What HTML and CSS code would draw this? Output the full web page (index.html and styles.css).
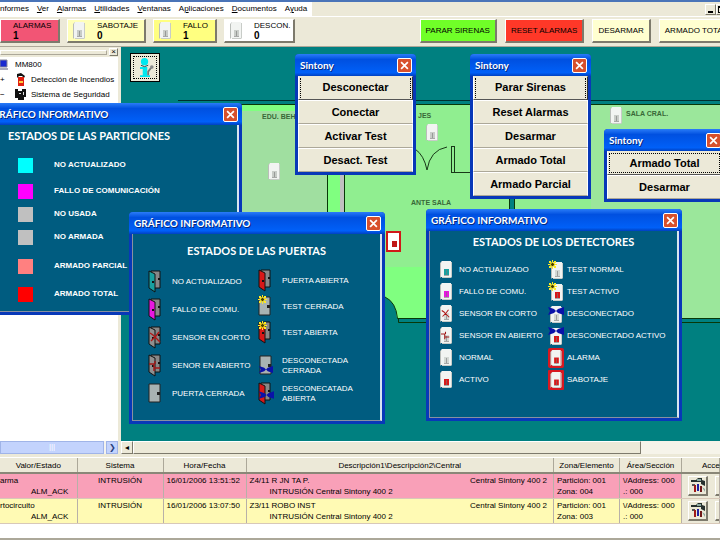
FILE: index.html
```html
<!DOCTYPE html>
<html lang="es">
<head>
  <meta charset="UTF-8">
  <meta name="viewport" content="width=device-width, initial-scale=1.0">
  <title>Sintony - MM800</title>
  <link rel="stylesheet" href="styles.css">
</head>
<body>
  <!-- Iconos compartidos -->
  <svg class="sprite" aria-hidden="true">
    <symbol id="detector" viewBox="0 0 12 17">
      <path d="M0 2L2 0V15L0 17Z" fill="#b9bdb9"/>
      <path d="M2 0H11V16H1V2Z" fill="#f2f4f2"/>
      <path d="M11 1H12V16L11 17H2V16H11Z" fill="#c8ccc8"/>
      <path d="M4 8H9V14H4Z" fill="currentColor"/>
      <path d="M6 9H7V14H6ZM4 14H9V15H4Z" fill="#777" fill-opacity=".6"/>
    </symbol>
    <symbol id="door-open" viewBox="0 0 14 23">
      <path d="M3 1H12V18H3Z" fill="#888" stroke="#111"/>
      <path d="M1 1L7 4V22L1 18Z" fill="currentColor" stroke="#111"/>
      <path d="M4 11H6V13H4ZM10 8H12V10H10Z" fill="#111"/>
    </symbol>
    <symbol id="door-closed" viewBox="0 0 14 23">
      <path d="M1 2H12V20H1Z" fill="#a9b3b3" stroke="#222"/>
      <path d="M9 10H12V13H9Z" fill="#222"/>
    </symbol>
    <symbol id="cross" viewBox="0 0 12 12">
      <path d="M1 2L4 4L6 6L11 11M10 1L7 5L2 10" fill="none" stroke="#b01818" stroke-width="1.4"/>
    </symbol>
    <symbol id="cut" viewBox="0 0 12 12">
      <path d="M0 4H5V8H11M6 1V4M5 11V8" fill="none" stroke="#a01818" stroke-width="1.4"/>
    </symbol>
    <symbol id="sun" viewBox="0 0 9 9">
      <path d="M1 1H3V3H1ZM4 0H5V2H4ZM6 1H8V3H6ZM0 4H9V5H0ZM1 6H3V8H1ZM4 7H5V9H4ZM6 6H8V8H6Z" fill="#ffeb20"/>
      <circle cx="4.500" cy="4.500" r="2" fill="#443c00" stroke="#ffeb20"/>
    </symbol>
    <symbol id="bow" viewBox="0 0 16 8">
      <path d="M0 0L6 2L8 4L10 2L16 0V8L10 6L8 4L6 6L0 8L2 4Z" fill="#0a12a8"/>
    </symbol>
    <symbol id="close" viewBox="0 0 8 8">
      <path d="M1 1L7 7M7 1L1 7" stroke="#fff" stroke-width="1.500" fill="none"/>
    </symbol>
    <symbol id="camera" viewBox="0 0 16 16">
      <path d="M1 3H6L8 1H12V3L15 4V9L11 7V5H1Z" fill="#26302e"/>
      <path d="M7 2H11V4H7ZM12 10L15 12V15Z" fill="#8aa8a0"/>
      <path d="M2 7H5V9H2Z" fill="#555"/>
      <path d="M4 8H6V15H4Z" fill="#a01818"/>
      <path d="M7 7H9V14H7Z" fill="#2020a0"/>
      <path d="M10 9H12V15H10Z" fill="#701818"/>
    </symbol>
  </svg>

  <div class="desktop">
    <nav class="menubar">
      <div class="menu">
        <a href="#">nformes</a>
        <a href="#"><u>V</u>er</a>
        <a href="#"><u>A</u>larmas</a>
        <a href="#"><u>U</u>tilidades</a>
        <a href="#"><u>V</u>entanas</a>
        <a href="#">A<u>p</u>licaciones</a>
        <a href="#"><u>D</u>ocumentos</a>
        <a href="#">A<u>y</u>uda</a>
      </div>
      <div class="sysbuttons">
        <button aria-label="Minimizar"><svg width="7" height="7"><path d="M1 5H6V7H1Z"/></svg></button>
        <button aria-label="Restaurar"><svg width="7" height="7"><path d="M0 0H7V7H0ZM1 2V6H6V2Z" fill-rule="evenodd"/></svg></button>
      </div>
    </nav>

    <div class="toolbar">
      <div class="group">
        <button class="counter alarm"><span>ALARMAS<b>1</b></span></button>
        <button class="counter sabotage"><svg class="detector"><use href="#detector"/></svg><span>SABOTAJE<b>0</b></span></button>
        <button class="counter fault"><svg class="detector"><use href="#detector"/></svg><span>FALLO<b>1</b></span></button>
        <button class="counter off"><svg class="detector"><use href="#detector"/></svg><span>DESCON.<b>0</b></span></button>
      </div>
      <div class="group actions">
        <button class="green">PARAR SIRENAS</button>
        <button class="red">RESET ALARMAS</button>
        <button>DESARMAR</button>
        <button>ARMADO TOTAL</button>
      </div>
    </div>

    <div class="workspace">
      <aside class="side">
        <div class="grip"><i></i><button aria-label="Cerrar panel">×</button></div>
        <ul class="tree">
          <li class="root">
            <svg width="9" height="12" viewBox="0 0 9 12"><path d="M0 1H7V8H0Z" fill="#1a2ad0" stroke="#889"/><path d="M0 9H8V11H0Z" fill="#aab"/></svg>
            MM800
          </li>
          <li>
            <span class="knob">+</span>
            <svg width="12" height="14" viewBox="0 0 12 14"><path d="M2 1L6 0L10 3L9 5L7 3H4L2 5Z" fill="#111"/><path d="M3 4H9V13H3Z" fill="#e02010"/><path d="M4 8H8V10H4Z" fill="#ffd040"/></svg>
            Detección de Incendios
          </li>
          <li>
            <span class="knob">−</span>
            <svg width="12" height="14" viewBox="0 0 12 14"><path d="M0 1H3V3H7V1H11V9H9V12H3V10H0Z" fill="#111"/><path d="M4 5H6V6H4ZM8 4H9V7H8Z" fill="#ddd"/></svg>
            Sistema de Seguridad
          </li>
        </ul>
        <div class="hscroll"><i class="thumb">|||</i><button aria-label="Desplazar">❯</button></div>
      </aside>

      <main class="plan">
        <div class="canvas">
          <svg class="map" viewBox="121 48 599 394" preserveAspectRatio="xMinYMin slice">
            <path d="M178 101.500H720" stroke="#003030" fill="none"/>
            <path d="M178 105H720V319H397Q396 303 385 298H242V105Z" fill="#90ee90"/>
            <path d="M242 105H345V298H242Z" fill="#80ff80"/>
            <path d="M345 105H510V112H345Z" fill="#90ee90"/>
            <path d="M242 112H327V298H242Z" fill="#a0dfa0"/>
            <path d="M340 112H344V298H340Z" fill="#c0c0c0"/>
            <path d="M591 106H720V319H591Z" fill="#9be79b"/>
            <path d="M385 268H427V319H397Q396 303 385 298Z" fill="#80ff80"/>
            <path d="M510 190H514V319H510Z" fill="#008080"/>
            <path d="M178 105.500H720M327.500 112V298M344.500 106V298M385 298Q396 303 397.500 319.500H720M398.500 319V323.500H720M509.500 190V319M514.500 190V319" stroke="#083808" fill="none"/>
            <path d="M415 150Q424 156 427 171Q430 151 447 148M451.500 147V173M454.500 147V173M451 147.500H455M397 174.500H402M451 173.500H471" stroke="#183818" fill="none"/>
            <g class="rooms">
              <text x="262" y="120">EDU. BEHU</text>
              <text x="418" y="119">JES</text>
              <text x="411" y="206">ANTE SALA</text>
              <text x="626" y="117">SALA CRAL.</text>
            </g>
            <g color="#c8ccc8">
              <use href="#detector" x="268" y="164" width="12" height="17"/>
              <use href="#detector" x="426" y="125" width="12" height="17"/>
              <use href="#detector" x="610" y="108" width="12" height="17"/>
            </g>
            <path d="M387 233H400V252H387Z" fill="#fff" stroke="#d01818" stroke-width="2"/>
            <path d="M392 242H397V248H392Z" fill="#c01818"/>
          </svg>
          <button class="info" aria-label="Información">
            <svg width="20" height="20" viewBox="2 0 21 22"><circle cx="12" cy="4" r="4" fill="#00e8f0"/><path d="M7 10H15V19H18V21H7V19H10V12H7Z" fill="#00e8f0"/><path d="M8 8Q12 11 16 8" fill="none" stroke="#18404a"/><path d="M16 19V15L19 11" fill="none" stroke="#777" stroke-width="2"/><circle cx="20" cy="10" r="2" fill="#888"/></svg>
          </button>
        </div>
        <div class="hscroll classic"><button aria-label="Desplazar">◂</button><i class="thumb"></i></div>
      </main>
    </div>

    <section class="events">
      <table>
        <colgroup>
          <col class="c-state"><col class="c-system"><col class="c-date"><col><col class="c-zone"><col class="c-area"><col class="c-access">
        </colgroup>
        <thead>
          <tr><th>Valor/Estado</th><th>Sistema</th><th>Hora/Fecha</th><th>Descripción1\Descripción2\Central</th><th>Zona/Elemento</th><th>Área/Sección</th><th>Acceso</th></tr>
        </thead>
        <tbody>
          <tr class="pink">
            <td class="state">arma<span>ALM_ACK</span></td>
            <td class="system">INTRUSIÓN</td>
            <td>16/01/2006 13:51:52</td>
            <td><div class="split"><span>Z4/11 R JN TA P.</span><span>Central Sintony 400 2</span></div><span class="sub">INTRUSIÓN Central Sintony 400 2</span></td>
            <td>Partición: 001<br>Zona: 004</td>
            <td>\/Address: 000<br>.: 000</td>
            <td class="access"><div><button aria-label="Cámara"><svg width="16" height="16"><use href="#camera"/></svg></button><button aria-label="Plano"></button></div></td>
          </tr>
          <tr class="yellow">
            <td class="state">rtocircuito<span>ALM_ACK</span></td>
            <td class="system">INTRUSIÓN</td>
            <td>16/01/2006 13:07:50</td>
            <td><div class="split"><span>Z3/11 ROBO INST</span><span>Central Sintony 400 2</span></div><span class="sub">INTRUSIÓN Central Sintony 400 2</span></td>
            <td>Partición: 001<br>Zona: 003</td>
            <td>\/Address: 000<br>.: 000</td>
            <td class="access"><div><button aria-label="Cámara"><svg width="16" height="16"><use href="#camera"/></svg></button><button aria-label="Plano"></button></div></td>
          </tr>
        </tbody>
      </table>
    </section>

    <!-- Ventanas flotantes -->
    <section class="window w-detector">
      <header><h2>Sintony</h2><button class="x" aria-label="Cerrar"><svg><use href="#close"/></svg></button></header>
      <div class="commands">
        <button class="default sides"><span>Desconectar</span></button>
        <button>Conectar</button>
        <button>Activar Test</button>
        <button>Desact. Test</button>
      </div>
    </section>

    <section class="window w-central">
      <header><h2>Sintony</h2><button class="x" aria-label="Cerrar"><svg><use href="#close"/></svg></button></header>
      <div class="commands">
        <button class="default sides"><span>Parar Sirenas</span></button>
        <button>Reset Alarmas</button>
        <button>Desarmar</button>
        <button>Armado Total</button>
        <button>Armado Parcial</button>
      </div>
    </section>

    <section class="window w-area">
      <header><h2>Sintony</h2><button class="x" aria-label="Cerrar"><svg><use href="#close"/></svg></button></header>
      <div class="commands">
        <button class="default"><span>Armado Total</span></button>
        <button>Desarmar</button>
      </div>
    </section>

    <section class="window w-partitions">
      <header><h2>GRÁFICO INFORMATIVO</h2><button class="x" aria-label="Cerrar"><svg><use href="#close"/></svg></button></header>
      <div class="legend">
        <h3>ESTADOS DE LAS PARTICIONES</h3>
        <ul class="swatches">
          <li><i class="cyan"></i>NO ACTUALIZADO</li>
          <li><i class="magenta"></i>FALLO DE COMUNICACIÓN</li>
          <li><i class="silver"></i>NO USADA</li>
          <li><i class="silver"></i>NO ARMADA</li>
          <li><i class="salmon"></i>ARMADO PARCIAL</li>
          <li><i class="solid-red"></i>ARMADO TOTAL</li>
        </ul>
      </div>
    </section>

    <section class="window w-doors">
      <header><h2>GRÁFICO INFORMATIVO</h2><button class="x" aria-label="Cerrar"><svg><use href="#close"/></svg></button></header>
      <div class="legend">
        <h3>ESTADOS DE LAS PUERTAS</h3>
        <div class="columns">
          <ul>
            <li><svg class="teal" viewBox="0 0 16 24"><use href="#door-open" width="14" height="23"/></svg>NO ACTUALIZADO</li>
            <li><svg class="pinkish" viewBox="0 0 16 24"><use href="#door-open" width="14" height="23"/></svg>FALLO DE COMU.</li>
            <li><svg class="gray" viewBox="0 0 16 24"><use href="#door-open" width="14" height="23"/><use href="#cross" x="1" y="5" width="12" height="12"/></svg>SENSOR EN CORTO</li>
            <li><svg class="gray" viewBox="0 0 16 24"><use href="#door-open" width="14" height="23"/><use href="#cut" x="1" y="6" width="12" height="12"/></svg>SENOR EN ABIERTO</li>
            <li><svg viewBox="0 0 16 24"><use href="#door-closed" width="14" height="23"/></svg>PUERTA CERRADA</li>
          </ul>
          <ul class="right">
            <li><svg class="crimson" viewBox="0 0 16 24"><use href="#door-open" width="14" height="23"/></svg>PUERTA ABIERTA</li>
            <li><svg viewBox="0 0 16 24"><use href="#door-closed" width="14" height="23"/><use href="#sun" width="9" height="9"/></svg>TEST CERRADA</li>
            <li><svg class="crimson" viewBox="0 0 16 24"><use href="#door-open" width="14" height="23"/><use href="#sun" width="9" height="9"/></svg>TEST ABIERTA</li>
            <li class="two"><svg viewBox="0 0 16 24"><use href="#door-closed" x="1" width="14" height="23"/><use href="#bow" x="1" y="12" width="14" height="7"/></svg>DESCONECTADA<br>CERRADA</li>
            <li><svg class="crimson" viewBox="0 0 16 24"><use href="#door-open" width="14" height="23"/><use href="#bow" x="1" y="9" width="15" height="8"/></svg>DESCONECATADA<br>ABIERTA</li>
          </ul>
        </div>
      </div>
    </section>

    <section class="window w-detectors">
      <header><h2>GRÁFICO INFORMATIVO</h2><button class="x" aria-label="Cerrar"><svg><use href="#close"/></svg></button></header>
      <div class="legend">
        <h3>ESTADOS DE LOS DETECTORES</h3>
        <div class="columns">
          <ul>
            <li><svg class="teal" viewBox="0 0 12 18"><use href="#detector" width="12" height="17"/></svg>NO ACTUALIZADO</li>
            <li><svg class="pinkish" viewBox="0 0 12 18"><use href="#detector" width="12" height="17"/></svg>FALLO DE COMU.</li>
            <li><svg class="blank" viewBox="0 0 12 18"><use href="#detector" width="12" height="17"/><use href="#cross" x="1" y="4" width="9" height="9"/></svg>SENSOR EN CORTO</li>
            <li><svg class="blank" viewBox="0 0 12 18"><use href="#detector" width="12" height="17"/><use href="#cut" x="1" y="4" width="9" height="9"/></svg>SENSOR EN ABIERTO</li>
            <li><svg class="blank" viewBox="0 0 12 18"><use href="#detector" width="12" height="17"/></svg>NORMAL</li>
            <li><svg class="crimson" viewBox="0 0 12 18"><use href="#detector" width="12" height="17"/></svg>ACTIVO</li>
          </ul>
          <ul class="right">
            <li><svg class="blank" viewBox="0 0 16 20"><use href="#detector" x="3" y="2" width="12" height="17"/><use href="#sun" width="9" height="9"/></svg>TEST NORMAL</li>
            <li><svg class="crimson" viewBox="0 0 16 20"><use href="#detector" x="3" y="2" width="12" height="17"/><use href="#sun" width="9" height="9"/></svg>TEST ACTIVO</li>
            <li><svg class="blank" viewBox="0 0 16 20"><use href="#detector" x="2" y="2" width="12" height="17"/><use href="#bow" y="3" width="16" height="8"/></svg>DESCONECTADO</li>
            <li><svg class="crimson" viewBox="0 0 16 20"><use href="#detector" x="2" y="2" width="12" height="17"/><use href="#bow" y="1" width="16" height="8"/></svg>DESCONECTADO ACTIVO</li>
            <li><svg class="crimson" viewBox="0 0 16 20"><rect width="16" height="20" rx="2" fill="#d81820"/><use href="#detector" x="2" y="2" width="12" height="16"/></svg>ALARMA</li>
            <li><svg class="crimson" viewBox="0 0 16 20"><rect width="16" height="20" rx="1" fill="#d81820"/><use href="#detector" x="2" y="2" width="12" height="16"/></svg>SABOTAJE</li>
          </ul>
        </div>
      </div>
    </section>
  </div>
</body>
</html>
```

FILE: styles.css
```css
* { box-sizing: border-box; }
body { margin: 0; font: 8px/10px "Liberation Sans", Arial, sans-serif; color: #000; background: #ece9d8; }
ul { list-style: none; margin: 0; padding: 0; }
h2, h3 { margin: 0; }
button { font: inherit; color: inherit; padding: 0; background: #ece9d8; border: 1px solid; border-color: #fff #7d7a6c #7d7a6c #fff; }
a { color: inherit; text-decoration: none; }
.sprite { display: none; }

.desktop { position: relative; display: flex; flex-direction: column; min-height: 100vh; overflow: hidden; border-top: 2px solid #4a74b8; }

/* Menú */
.menubar { display: flex; justify-content: space-between; height: 15px; border-bottom: 1px solid #fff; }
.menu { display: flex; gap: 8px; padding: 2px 5px 0 0; background: #fff; white-space: nowrap; }
.sysbuttons { display: flex; align-items: center; margin-right: -7px; }
.sysbuttons button { display: flex; align-items: center; justify-content: center; width: 11px; height: 11px; }

/* Barra de estado y comandos */
.toolbar { display: flex; justify-content: space-between; height: 30px; padding: 2px 0 3px; border-bottom: 1px solid #aca899; }
.group { display: flex; gap: 7px; }
.group button { border-width: 1px 2px 2px 1px; white-space: nowrap; }
.counter { display: flex; align-items: center; gap: 12px; padding-left: 5px; text-align: left; }
.counter b { display: block; font-size: 10px; line-height: 10px; }
.counter.alarm { width: 60px; padding-left: 12px; background: #f25575; }
.counter.sabotage { width: 79px; background: #ffffb8; }
.counter.fault { width: 64px; background: #ffff80; }
.counter.off { width: 71px; background: #fff; }
.detector { width: 12px; height: 17px; color: #c8ccc8; }
.actions { gap: 8px; margin-right: -14px; }
.actions button { padding: 0 5px; background: #ffffd0; }
.actions .green { background: #70ff28; }
.actions .red { background: #ff3828; }

/* Zona central */
.workspace { display: flex; flex: 1; }
.side { display: flex; flex-direction: column; width: 118px; background: #fff; }
.grip { display: flex; align-items: center; gap: 2px; height: 10px; background: #ece9d8; }
.grip i { flex: 1; height: 5px; border: 1px solid; border-color: #fff #aca899 #aca899 #fff; }
.grip button { width: 9px; height: 8px; line-height: 6px; }
.tree { flex: 1; white-space: nowrap; overflow: hidden; }
.tree li { display: flex; align-items: center; height: 15px; }
.tree li svg { margin-right: 4px; }
.tree .root svg { margin-right: 6px; }
.knob { width: 15px; }
.hscroll { display: flex; align-items: stretch; gap: 2px; height: 13px; background: #f4f3ee; }
.hscroll button { width: 12px; background: #c3d3fd; border: 1px solid #a0b4e8; color: #28407c; line-height: 8px; }
.hscroll .thumb { flex: 1; background: #c3d3fd; border: 1px solid #a0b4e8; color: #fff; font-style: normal; text-align: center; }
.plan { display: flex; flex: 1; flex-direction: column; min-width: 0; border-left: 3px solid #ece9d8; }
.canvas { position: relative; flex: 1; padding: 6px 9px; background: #008080; overflow: hidden; }
.map { position: absolute; top: 0; left: 0; width: 100%; height: 100%; }
.rooms { font: bold 7px "Liberation Sans", Arial, sans-serif; fill: #386838; }
.info { position: relative; display: flex; align-items: center; justify-content: center; width: 30px; height: 29px; border: 1px solid #000; outline: 1px dotted #000; outline-offset: -4px; }
.hscroll.classic { gap: 0; padding-right: 79px; background: #f6f4ea; }
.hscroll.classic button, .hscroll.classic .thumb { background: #ece9d8; border-color: #fff #7d7a6c #7d7a6c #fff; color: #000; }

/* Lista de eventos */
.events { margin-top: 3px; padding-bottom: 14px; background: #fff; border-top: 1px solid #fff; border-bottom: 2px solid #aca899; overflow: hidden; }
table { width: 100%; table-layout: fixed; border-collapse: collapse; }
.c-state { width: 77px; }
.c-system { width: 86px; }
.c-date { width: 83px; }
.c-zone { width: 66px; }
.c-area { width: 62px; }
.c-access { width: 38px; }
th { height: 15px; padding: 2px 0 0; font-weight: normal; background: #ece9d8; border-right: 1px solid #aca899; border-bottom: 2px solid #8a8778; white-space: nowrap; }
th:last-child { padding-left: 20px; }
td { height: 25px; padding: 1px 3px; vertical-align: top; line-height: 11px; border-right: 1px solid #b8b0a8; border-bottom: 1px solid #d8c8b8; white-space: nowrap; overflow: hidden; }
.pink { background: #f9a0b8; }
.yellow { background: #fffab4; }
.state { padding-left: 0; }
.state span { display: block; padding-left: 31px; }
.system { text-align: center; }
.split { display: flex; justify-content: space-between; padding-right: 3px; }
.sub { padding-left: 20px; }
td.access { padding: 2px 0 2px 6px; background: #ece9d8; }
.access div { display: flex; gap: 7px; }
.access button { flex: none; width: 20px; height: 20px; border-width: 1px 2px 2px 1px; }

/* Ventanas */
.window { position: absolute; padding: 0 3px 3px; background: #0838b8; border-radius: 4px 4px 0 0; }
.window header { display: flex; align-items: center; justify-content: space-between; height: 22px; margin: 0 -3px; padding: 0 4px 0 5px; background: linear-gradient(#2a7cf8, #0050e0 25%, #0060f8 85%, #0040c0); border-radius: 4px 4px 0 0; }
.window h2 { font: bold 10px/12px Lato, "Open Sans", sans-serif; color: #fff; text-shadow: 1px 1px #04287c; white-space: nowrap; }
.x { display: flex; align-items: center; justify-content: center; width: 15px; height: 15px; background: #d8502c; border: 1px solid #fff; border-radius: 2px; }
.x svg { width: 9px; height: 9px; }
.commands { display: flex; flex-direction: column; }
.commands button { height: 24px; font-size: 11px; font-weight: bold; border-color: #fff #fff #aca899 #fff; white-space: nowrap; }
.commands .default { padding: 1px; border-color: #ece9d8 #333 #555 #fff; }
.default span { display: block; height: 20px; line-height: 19px; border: 1px dotted #000; }
.default.sides span { border-top: 0; border-bottom: 0; }

.w-detector { top: 52px; left: 295px; width: 121px; }
.w-central { top: 52px; left: 470px; width: 121px; }
.w-area { top: 127px; left: 604px; width: 121px; }
.w-partitions { top: 101px; left: -13px; width: 255px; }
.w-doors { top: 210px; left: 129px; width: 256px; }
.w-detectors { top: 207px; left: 426px; width: 256px; }

/* Leyendas */
.legend { min-height: 187px; padding: 4px 8px; background: #005c80; border: 1px solid #8890a0; border-top: 0; border-right: 2px solid #d8e4f0; color: #fff; }
.legend h3 { font: bold 11px/14px Lato, "Open Sans", sans-serif; white-space: nowrap; }
.legend li { display: flex; align-items: center; white-space: nowrap; }
.swatches { display: grid; grid-template-rows: 28px 24px 22px 24px 34px 22px; padding: 8px 0 0 19px; font-weight: bold; }
.swatches i { width: 15px; height: 15px; margin-right: 21px; }
.cyan { background: #00ffff; }
.magenta { background: #ff00ff; }
.silver { background: #c0c0c0; }
.salmon { background: #ff8080; }
.solid-red { background: #ff0000; }
.columns { display: flex; }
.teal { color: #18a0a0; }
.pinkish { color: #e818e0; }
.gray { color: #909090; }
.crimson { color: #d81818; }
.blank { color: #d4d8d4; }
.w-partitions h3 { padding-left: 9px; }
.w-doors .legend { padding-top: 10px; }
.w-doors h3, .w-detectors h3 { text-align: center; }
.w-doors .columns { padding: 10px 0 0 7px; }
.w-doors ul { width: 110px; }
.w-doors li { height: 28px; }
.w-doors li svg { flex: none; width: 16px; height: 24px; margin-right: 8px; }
.w-doors .right li { height: 26px; }
.w-doors .right .two { margin-top: 6px; }
.w-doors .right .two ~ li, .w-doors .right .two { height: 28px; }
.w-detectors .columns { padding: 10px 0 0 2px; }
.w-detectors ul { width: 108px; }
.w-detectors li { height: 22px; }
.w-detectors li svg { flex: none; width: 12px; height: 18px; margin-right: 7px; }
.w-detectors .right li svg { width: 16px; height: 20px; margin-right: 3px; }
```
